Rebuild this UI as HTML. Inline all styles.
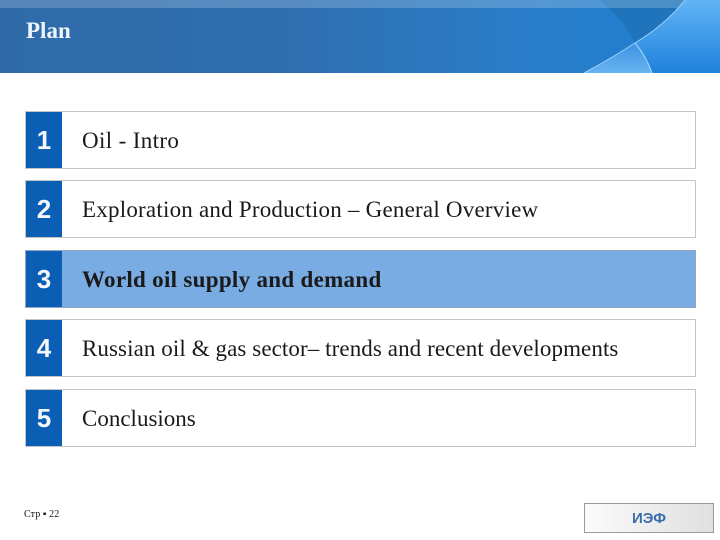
<!DOCTYPE html>
<html>
<head>
<meta charset="utf-8">
<style>
html,body{margin:0;padding:0;background:#fff;}
#s{position:relative;width:720px;height:540px;overflow:hidden;background:#fff;}
.h{position:absolute;left:0;top:0;width:720px;height:73px;background:linear-gradient(90deg,#2f69a8 0%,#2e6fb0 40%,#2a7cc6 70%,#1f80d4 100%);}
.p{position:absolute;left:26px;top:19px;font:bold 23px/24px "Liberation Serif",serif;color:#eef6fb;}
.r{position:absolute;left:25px;width:669px;height:56px;border:1px solid #c4c4c4;background:#fff;}
.n{position:absolute;left:0;top:0;width:36px;height:56px;background:#0a5fb4;color:#f4f8fc;font:bold 26px/57px "Liberation Sans",sans-serif;text-align:center;}
.x{position:absolute;left:56px;top:0;font:23px/57px "Liberation Serif",serif;color:#1a1a1a;white-space:nowrap;}
.a{background:#7aace4;border-color:#93a6c4;}
.a .x{font-weight:bold;}
.c{position:absolute;left:24px;top:509px;font:10px/12px "Liberation Serif","Noto Sans CJK SC",serif;color:#111;white-space:nowrap;letter-spacing:0.1px;}
.l{position:absolute;left:584px;top:503px;width:128px;height:28px;border:1px solid #999;background:linear-gradient(90deg,#fbfbfb,#e0e0e0);color:#3a6ea8;font:bold 15px/30px "Liberation Sans",sans-serif;text-align:center;}
</style>
</head>
<body>
<div id="s">
<div class="h">
<svg width="720" height="73" style="position:absolute;left:0;top:0">
<defs>
<linearGradient id="g" x1="0" y1="0" x2="0" y2="1"><stop offset="0" stop-color="#62b4f6"/><stop offset="1" stop-color="#1f82dc"/></linearGradient>
<linearGradient id="b" x1="0" y1="0" x2="0" y2="1"><stop offset="0" stop-color="#3c92e2"/><stop offset="1" stop-color="#68b4f2"/></linearGradient>
</defs>
<path d="M600 0 L685 0 Q665 25 635 43 Q622 18 600 0 Z" fill="#1f74bc"/>
<rect width="720" height="8" fill="#fff" opacity=".2"/>
<path d="M685 0 L720 0 L720 73 L652 73 Q646 56 635 43 Q665 25 685 0 Z" fill="url(#g)"/>
<path d="M584 73 Q612 58 635 43 Q646 56 652 73 Z" fill="url(#b)"/>
<path d="M584 73 Q612 58 635 43 Q665 25 685 0" fill="none" stroke="#9ed2f8" stroke-width="1"/>
<path d="M635 43 Q646 56 652 73" fill="none" stroke="#9ed2f8" stroke-width="1.2"/>
</svg>
<div class="p">Plan</div>
</div>
<div class="r" style="top:111px"><div class="n">1</div><div class="x" style="letter-spacing:.36px">Oil - Intro</div></div>
<div class="r" style="top:180px"><div class="n">2</div><div class="x" style="letter-spacing:.22px">Exploration and Production – General Overview</div></div>
<div class="r a" style="top:250px"><div class="n">3</div><div class="x" style="letter-spacing:.3px">World oil supply and demand</div></div>
<div class="r" style="top:319px"><div class="n">4</div><div class="x" style="letter-spacing:.09px">Russian oil &amp; gas sector– trends and recent developments</div></div>
<div class="r" style="top:389px"><div class="n">5</div><div class="x">Conclusions</div></div>
<div class="c">Стр ▪ 22</div>
<div class="l">ИЭФ</div>
</div>
</body>
</html>
